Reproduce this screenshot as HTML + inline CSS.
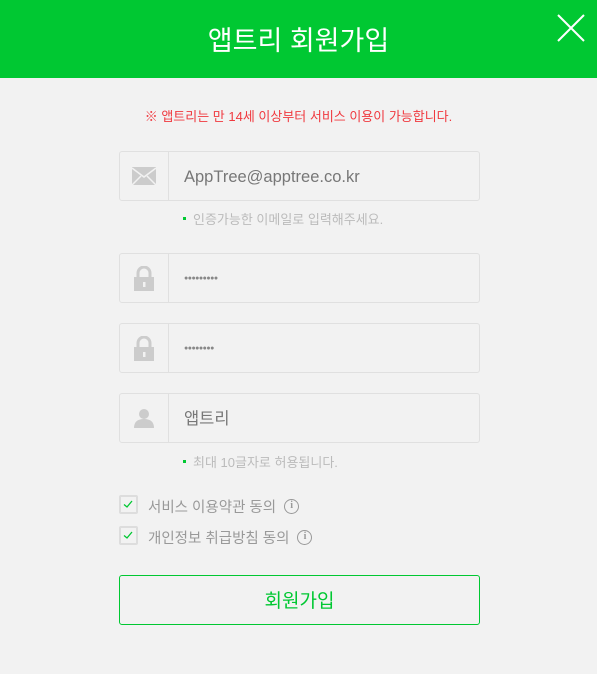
<!DOCTYPE html>
<html><head><meta charset="utf-8"><style>
*{margin:0;padding:0;box-sizing:border-box}
body{width:597px;height:674px;background:#f2f2f2;font-family:"Liberation Sans","Noto Sans CJK KR",sans-serif;position:relative;overflow:hidden}
.hd{position:absolute;left:0;top:0;width:597px;height:78px;background:#00c832;color:#fff;font-size:27px;text-align:center;line-height:82px}
.x{position:absolute;right:12px;top:14px}
.notice{position:absolute;top:106px;left:0;width:597px;text-align:center;color:#f0393f;font-size:13px}
.box{position:absolute;left:119px;width:361px;height:50px;border:1px solid #e0e0e0;border-radius:3px}
.box .ic{position:absolute;left:0;top:0;width:49px;height:48px;border-right:1px solid #e0e0e0;display:flex;align-items:center;justify-content:center}
.box .t{position:absolute;left:64px;top:0;line-height:50px;font-size:16.5px;color:#777}
.dots{font-size:7px!important;letter-spacing:-0.5px;color:#888!important}
.hint{position:absolute;left:183px;font-size:13px;color:#bbb}
.hint b{display:inline-block;width:3px;height:3px;background:#00c832;margin-right:7px;vertical-align:middle;position:relative;top:-2px}
.cb{position:absolute;left:119px;width:19px;height:19px;border:2px solid #ddd;border-radius:2px}
.cl{position:absolute;left:148px;font-size:14.5px;color:#999}
.info{display:inline-block;width:15px;height:15px;border:1.5px solid #999;border-radius:50%;font-size:10px;text-align:center;line-height:12px;color:#999;margin-left:8px;font-weight:bold;font-family:"Liberation Serif",serif;vertical-align:middle;position:relative;top:-2px}
.btn{position:absolute;left:119px;top:575px;width:361px;height:50px;border:1px solid #00c832;border-radius:3px;color:#00c832;font-size:19px;text-align:center;line-height:52px}
</style></head><body>
<div class="hd">앱트리 회원가입</div>
<svg class="x" width="28" height="28" viewBox="0 0 28 28"><path d="M1 1L27 27M27 1L1 27" stroke="#fff" stroke-width="2"/></svg>
<div class="notice">※ 앱트리는 만 14세 이상부터 서비스 이용이 가능합니다.</div>

<div class="box" style="top:151px"><div class="ic"><svg width="24" height="18" viewBox="0 0 24 18"><path d="M0 0H24V18H0Z" fill="#ccc"/><path d="M0 1L12 10L24 1M0 18L9 9M24 18L15 9" stroke="#f2f2f2" stroke-width="1.5" fill="none"/></svg></div><div class="t">AppTree@apptree.co.kr</div></div>
<div class="hint" style="top:209px"><b></b>인증가능한 이메일로 입력해주세요.</div>

<div class="box" style="top:253px"><div class="ic"><svg width="20" height="25" viewBox="0 0 20 25"><path d="M4 11V7a6 6 0 0 1 12 0v4" stroke="#ccc" stroke-width="3" fill="none"/><rect x="0" y="11" width="20" height="14" fill="#ccc"/><rect x="9" y="16" width="2.5" height="5" fill="#f2f2f2"/></svg></div><div class="t dots">●●●●●●●●●</div></div>
<div class="box" style="top:323px"><div class="ic"><svg width="20" height="25" viewBox="0 0 20 25"><path d="M4 11V7a6 6 0 0 1 12 0v4" stroke="#ccc" stroke-width="3" fill="none"/><rect x="0" y="11" width="20" height="14" fill="#ccc"/><rect x="9" y="16" width="2.5" height="5" fill="#f2f2f2"/></svg></div><div class="t dots">●●●●●●●●</div></div>
<div class="box" style="top:393px"><div class="ic"><svg width="20" height="20" viewBox="0 0 20 20"><circle cx="10" cy="6" r="5" fill="#ccc"/><path d="M0 20Q0 11 10 11Q20 11 20 20Z" fill="#ccc"/></svg></div><div class="t">앱트리</div></div>
<div class="hint" style="top:452px"><b></b>최대 10글자로 허용됩니다.</div>

<div class="cb" style="top:495px"><svg width="15" height="15" viewBox="0 0 15 15"><path d="M3 7.5L6 10L11 4" stroke="#00c832" stroke-width="1.3" fill="none"/></svg></div>
<div class="cl" style="top:496px">서비스 이용약관 동의<span class="info">i</span></div>
<div class="cb" style="top:526px"><svg width="15" height="15" viewBox="0 0 15 15"><path d="M3 7.5L6 10L11 4" stroke="#00c832" stroke-width="1.3" fill="none"/></svg></div>
<div class="cl" style="top:527px">개인정보 취급방침 동의<span class="info">i</span></div>

<div class="btn">회원가입</div>
</body></html>
